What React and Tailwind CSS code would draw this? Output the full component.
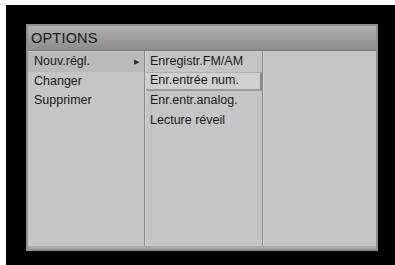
import React from "react";

const col1 = ["Nouv.régl.", "Changer", "Supprimer"];
const col2 = ["Enregistr.FM/AM", "Enr.entrée num.", "Enr.entr.analog.", "Lecture réveil"];

export default function App() {
  return (
    <div className="w-[395px] h-[265px] bg-white pl-[6px] pt-[5px] overflow-hidden" style={{ fontFamily: '"Liberation Sans", Arial, sans-serif' }}>
      <div className="w-full h-full bg-black pl-[20px] pt-[19px]">
        {/* Menu panel */}
        <div className="w-[352px] h-[227px] flex flex-col border-2 border-[#8e8e8e] bg-[#c5c5c5] shadow-[inset_0_-3px_0_#a9a9a9]">
          {/* Header */}
          <div className="h-[25px] shrink-0 flex items-center pl-[3px] bg-gradient-to-b from-[#b2b2b2] to-[#8c8c8c] border-b border-[#7c7c7c]">
            <span className="text-[14.5px] leading-none text-[#161616] tracking-[0.2px]">OPTIONS</span>
          </div>

          {/* Columns */}
          <div className="flex-1 flex pb-[3px]">
            <div className="w-[117px] pt-[1px] border-r border-[#8a8a8a]">
              {col1.map((t, i) => (
                <div
                  key={t}
                  className={`h-[19.5px] flex items-center justify-between pl-[6px] pr-[5px] text-[12.5px] text-[#1a1a1a] ${i === 0 ? "bg-[#b9b9b9]" : ""}`}
                >
                  <span>{t}</span>
                  {i === 0 && <span className="text-[7px] text-[#2a2a2a]">▶</span>}
                </div>
              ))}
            </div>
            <div className="w-[118px] pt-[1px] border-l border-[#d4d4d4] border-r border-r-[#8a8a8a]">
              {col2.map((t, i) => (
                <div
                  key={t}
                  className={`h-[19.5px] flex items-center pl-[4px] text-[12.5px] text-[#1a1a1a] ${i === 1 ? "bg-[#d0d0d0] border-t border-[#b0b0b0] border-r-2 border-r-[#8c8c8c] border-b-2 border-b-[#999999]" : ""}`}
                >
                  {t}
                </div>
              ))}
            </div>
            <div className="flex-1 border-l border-[#d4d4d4]" />
          </div>
        </div>
      </div>
    </div>
  );
}
